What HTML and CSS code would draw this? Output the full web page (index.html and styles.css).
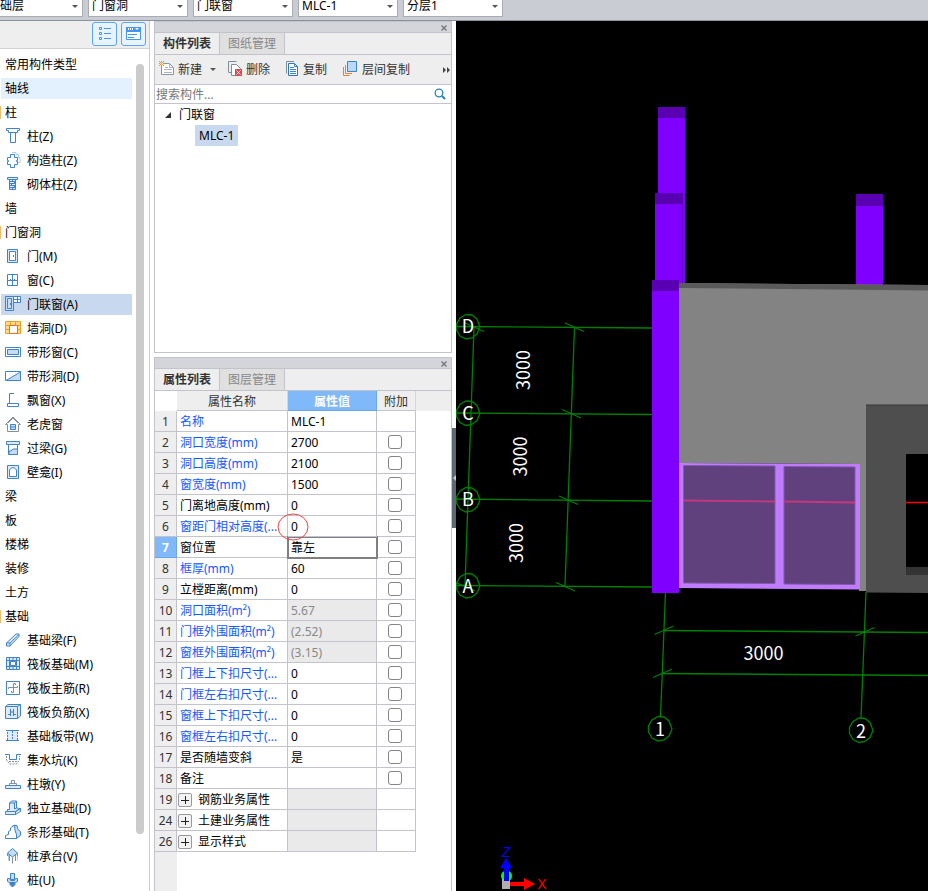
FILE: index.html
```html
<!DOCTYPE html>
<html lang="zh-CN">
<head>
<meta charset="utf-8">
<title>构件与属性</title>
<link rel="stylesheet" href="styles.css">
</head>
<body>
<div class="app">
  <header class="topbar">
    <select class="combo combo-first" aria-label="楼层"><option>础层</option></select>
    <select class="combo" aria-label="构件分类"><option>门窗洞</option></select>
    <select class="combo" aria-label="构件类型"><option>门联窗</option></select>
    <select class="combo" aria-label="构件名称"><option>MLC-1</option></select>
    <select class="combo" aria-label="分层"><option>分层1</option></select>
  </header>
  <div class="workspace">
    <aside class="sidebar">
      <div class="side-tools">
        <button class="view-btn" type="button" aria-label="列表视图"><svg width="17" height="16" viewBox="0 0 17 16"><g fill="none" stroke="#4596ee"><path d="M3.500 1.500h2v2h-2zM3.500 6.500h2v2h-2zM3.500 11.500h2v2h-2zM8 2.500h7M8 7.500h7M8 12.500h7"/></g></svg></button>
        <button class="view-btn" type="button" aria-label="面板视图"><svg width="17" height="16" viewBox="0 0 17 16"><path d="M1.500 1.500h14v12h-14z" fill="#fff" stroke="#4596ee"/><path d="M1 1h15v5H1z" fill="#4596ee"/><path d="M3.500 2v2M5.500 2v2M7.500 2v2" stroke="#fff"/><path d="M10 2h4l-2 2z" fill="#fff"/><path d="M3 8.500h9M3 11.500h6" stroke="#4596ee"/></svg></button>
      </div>
      <div class="side-body">
        <ul class="types">
          <li class="group">常用构件类型</li>
          <li class="group hover">轴线</li>
          <li class="group open">柱</li>
          <li><svg class="ic" viewBox="0 0 16 16"><path d="M1.500.5h13v2h-2v2h-9v-2h-2zM5.500 4.500h5v10h-5z"/></svg>柱(Z)</li>
          <li><svg class="ic" viewBox="0 0 16 16"><path class="pale" d="M7 .5h4v2h2.500v3H15v5h-2"/><path d="M5.500 2.500h4v3h3v3h-1v1h1v3h-3v3h-4v-3h-3v-3h1v-1h-1v-3h3z"/></svg>构造柱(Z)</li>
          <li><svg class="ic" viewBox="0 0 16 16"><path class="fill" d="M2.500 1.500h10v2h-10zM4.500 3.500h6v10h-6z"/><path d="M5 5.500h6M5 7.500h6M5 9.500h6M5 11.500h6M7.500 4v1.500M9.500 5.500v2M6.500 7.500v2M9.500 9.500v2M7.500 11.500v2"/></svg>砌体柱(Z)</li>
          <li class="group">墙</li>
          <li class="group open">门窗洞</li>
          <li><svg class="ic" viewBox="0 0 16 16"><path class="fill" d="M2.500 1.500h10v13h-10z"/><path class="white" d="M4.500 3.500h6v9h-6z"/><path d="M8.500 7v2"/></svg>门(M)</li>
          <li><svg class="ic" viewBox="0 0 16 16"><path d="M2.500 2.500h10v11h-10zM7.500 3v10M3 8.500h9M5.500 7v1M9.500 7v1"/></svg>窗(C)</li>
          <li class="selected"><svg class="ic" viewBox="0 0 16 16"><path class="mid" d="M.5.5h8v14h-8z"/><path class="mid" d="M2.500 2.500h4v10h-4z"/><path class="white" d="M8.500.5h7v6h-7z"/><path d="M12.500.5v6M8.500 3.500h7M5.500 7v2"/></svg>门联窗(A)</li>
          <li><svg class="ic" viewBox="0 0 16 16"><path d="M.5 1.500h15v12H.5z" fill="#ffd98a" stroke="#f0a01c"/><path d="M.5 5.500h15M.5 9.500h4M11 9.500h4M5.500 2v3M10.500 2v3" stroke="#f0a01c"/><path d="M4.500 5.500h8v8h-8z" fill="#fff" stroke="#f26a21"/></svg>墙洞(D)</li>
          <li><svg class="ic" viewBox="0 0 16 16"><path class="white" d="M.5 3.500h15v9H.5z"/><path class="mid" d="M2.500 5.500h11v5h-11z"/></svg>带形窗(C)</li>
          <li><svg class="ic" viewBox="0 0 16 16"><path class="white" d="M.5 3.500h15v9H.5z"/><path class="mid" d="M1 12.500 15.500 4v8.500z"/></svg>带形洞(D)</li>
          <li><svg class="ic" viewBox="0 0 16 16"><path d="M9 1.500H4.500v10M2.500 11.500h11v3h-11z"/></svg>飘窗(X)</li>
          <li><svg class="ic" viewBox="0 0 16 16"><path class="gray" d="M.5 8.500 8 1l7.500 7.500h-2v7h-11v-7zM3 7l5-5 5 5"/><path class="mid" d="M5.500 8.500h5v5h-5zM5.500 11h5"/></svg>老虎窗</li>
          <li><svg class="ic" viewBox="0 0 16 16"><path class="fill" d="M1.500 1.500h13v3h-13z"/><path class="white" d="M3.500 4.500h9v10h-9z"/><path class="mid" d="M4 11h2l2-2h4.500v5.500H4z"/></svg>过梁(G)</li>
          <li><svg class="ic" viewBox="0 0 16 16"><path class="fill" d="M2.500 1.500h11v13h-11z"/><path class="white" d="M4.500 12.500V6q3.500-5 7 0v6.500z"/></svg>壁龛(I)</li>
          <li class="group">梁</li>
          <li class="group">板</li>
          <li class="group">楼梯</li>
          <li class="group">装修</li>
          <li class="group">土方</li>
          <li class="group open">基础</li>
          <li><svg class="ic" viewBox="0 0 16 16"><path class="fill" d="M1.500 11 11 2h3v2.500L5 14H1.500z"/><path d="M1.500 11H5v3M5 11l9-8.500"/></svg>基础梁(F)</li>
          <li><svg class="ic" viewBox="0 0 16 16"><path class="fill" d="M1.500 1.500h13v12h-13z"/><path d="M1.500 4.500h13M1.500 10.500h13M4.500 1.500v12M11.500 1.500v12M8 1.500v3M8 10.500v3"/><path class="white" d="M5.500 5.500h5v4h-5z"/></svg>筏板基础(M)</li>
          <li><svg class="ic" viewBox="0 0 16 16"><path d="M1.500 1.500h13v13h-13z"/><path class="gray" d="M10.500 5V3.500h-2v9h-2V11M3.500 9V7.500h9V6"/></svg>筏板主筋(R)</li>
          <li><svg class="ic" viewBox="0 0 16 16"><path class="fill" d="M3 .5h12.500V12l-3 2.500H.5v-12z"/><path d="M.5 2.500h12v12M12.500 2.500l3-2M5.500 5v7M8.500 5v7M3 10.500h2.500M5.500 8h3M8.500 10.500H11"/></svg>筏板负筋(X)</li>
          <li><svg class="ic" viewBox="0 0 16 16"><path class="palefill" d="M2 2h11v11H2z"/><path d="M1 2.500h13M1 12.500h13"/><path class="dots" d="M2.500 4v8M7.500 3v10M12.500 4v8"/></svg>基础板带(W)</li>
          <li><svg class="ic" viewBox="0 0 16 16"><path d="M0 2.500h4.500v5h7v-5H16"/><path class="gray dots" d="M1.500 4v4l3 4h7l3-4V4M4 9.500h8"/></svg>集水坑(K)</li>
          <li><svg class="ic" viewBox="0 0 16 16"><path class="fill" d="M.5 9.500h15v3H.5z"/><path class="gray" d="M4.500 9.500V7.500h7v2M6.500 7.500v-3h3v3"/></svg>柱墩(Y)</li>
          <li><svg class="ic" viewBox="0 0 16 16"><path class="fill" d="M.5 11.500h10v3H.5zM10.500 11.500l5-3v3l-5 3zM2.500 11.500v-2h2V3l2-2h5v7l4 .5-5 3z"/><path d="M4.500 3h5v6M9.500 3l2-2M9.500 9l2-1"/></svg>独立基础(D)</li>
          <li><svg class="ic" viewBox="0 0 16 16"><path class="mid" d="M9.500 5.500 8 1.500h4l1 4 2.500 2v4l-4 3z"/><path class="white" d="M.5 14.500v-3l3-1v-3l2-1V4l4-3 .5 5.500 1.500 4v4z"/></svg>条形基础(T)</li>
          <li><svg class="ic" viewBox="0 0 16 16"><path class="pale" d="M3.500 5.500v7M12.500 5.500v7"/><path class="mid" d="M7.500.5 12.500 5l-5 4-5-4z"/><path class="gray" d="M4.500 7v6M7.500 9v6.500M10.500 7v6M2.500 5v3M12.500 5v3"/></svg>桩承台(V)</li>
          <li><svg class="ic" viewBox="0 0 16 16"><path class="mid" d="M5.500 1.500h4v6h-4z"/><path class="mid" d="M2.500 6.500h2l1 2h4l1-2h2v3l-2 1h-6l-2-1z"/><path d="M5 10.500h5v2L7.500 15 5 12.500z" fill="#3f83cb"/></svg>桩(U)</li>
        </ul>
        <div class="scroll"><div class="thumb"></div></div>
      </div>
    </aside>

    <div class="panels">
      <section class="panel">
        <div class="titlebar"><button type="button" class="close" aria-label="关闭构件列表"><svg width="8" height="8" viewBox="0 0 8 8"><path d="M1.500 1.500l5 5M6.500 1.500l-5 5"/></svg></button></div>
        <div class="tabs"><button type="button" class="tab active">构件列表</button><button type="button" class="tab">图纸管理</button></div>
        <div class="toolbar">
          <button type="button" class="tool"><svg width="16" height="16" viewBox="0 0 16 16"><path d="M2.500 2.500h8l4 4v7h-12z" fill="#fff" stroke="#8796a5"/><path d="M10.500 2.500v4h4M6 6.500h3M5 8.500h8M5 11.500h8" fill="none" stroke="#a9b4c0"/><path d="M0 0h5v5H0z" fill="#eee"/><path d="M0 0l5 5M5 0 0 5M2.500 0v1M2.500 4v1M0 2.500h1M4 2.500h1" stroke="#f0971b"/></svg>新建<span class="caret"></span></button>
          <button type="button" class="tool"><svg width="16" height="16" viewBox="0 0 16 16"><path d="M9.500.5h-8v11H4" fill="none" stroke="#7f8e9c"/><path d="M4.500 3.500h5l4 4v7h-9z" fill="#fff" stroke="#7f8e9c"/><path d="M8 8h7v7H8z" fill="#d94a52"/><path d="m9.500 9.500 4 4M13.500 9.500l-4 4" stroke="#fff"/></svg>删除</button>
          <button type="button" class="tool tool-copy"><svg width="13" height="16" viewBox="0 0 13 16"><path d="M8 .5H.5v12" fill="none" stroke="#7f8e9c"/><path d="M2.500 2.500h6l3 3v9h-9z" fill="#fff" stroke="#2e75c3"/><path d="M8.500 2.500v3h3M4 6.500h4M4 8.500h6M4 10.500h6M4 12.500h6" fill="none" stroke="#3f83cb"/></svg>复制</button>
          <button type="button" class="tool tool-copy"><svg width="15" height="16" viewBox="0 0 15 16"><path d="M2.500 4v8.500H9M.5 6v8.500h6" fill="none" stroke="#ef7e32"/><path d="M4.500.5h9v10h-9z" fill="#b9d8fa" stroke="#3f83cb"/></svg>层间复制</button>
          <button type="button" class="more" aria-label="更多"><svg width="8" height="6" viewBox="0 0 8 6"><path d="M0 0l3 3-3 3zM4 0l3 3-3 3z" fill="#444"/></svg></button>
        </div>
        <div class="search"><input type="text" aria-label="搜索构件" placeholder="搜索构件..."><svg width="12" height="12" viewBox="0 0 12 12"><circle cx="5" cy="5" r="3.800" fill="none" stroke="#2783bd" stroke-width="1.300"/><path d="m8 8 3 3" stroke="#2783bd" stroke-width="2"/></svg></div>
        <ul class="tree">
          <li class="node"><svg width="7" height="7" viewBox="0 0 7 7"><path d="M6 0v6H0z" fill="#333"/></svg>门联窗</li>
          <li class="leaf"><span>MLC-1</span></li>
        </ul>
      </section>

      <section class="panel panel-props">
        <div class="titlebar"><button type="button" class="close" aria-label="关闭属性列表"><svg width="8" height="8" viewBox="0 0 8 8"><path d="M1.500 1.500l5 5M6.500 1.500l-5 5"/></svg></button></div>
        <div class="tabs"><button type="button" class="tab active">属性列表</button><button type="button" class="tab">图层管理</button></div>
        <div class="grid-area">
          <table class="props">
            <colgroup><col class="c-num"><col class="c-name"><col class="c-val"><col class="c-add"><col></colgroup>
            <thead><tr><th class="corner"></th><th>属性名称</th><th class="on">属性值</th><th>附加</th><th class="rest"></th></tr></thead>
            <tbody>
              <tr><th>1</th><td class="blue">名称</td><td>MLC-1</td><td></td></tr>
              <tr><th>2</th><td class="blue">洞口宽度(mm)</td><td>2700</td><td><input type="checkbox" aria-label="附加 洞口宽度"></td></tr>
              <tr><th>3</th><td class="blue">洞口高度(mm)</td><td>2100</td><td><input type="checkbox" aria-label="附加 洞口高度"></td></tr>
              <tr><th>4</th><td class="blue">窗宽度(mm)</td><td>1500</td><td><input type="checkbox" aria-label="附加 窗宽度"></td></tr>
              <tr><th>5</th><td>门离地高度(mm)</td><td>0</td><td><input type="checkbox" aria-label="附加 门离地高度"></td></tr>
              <tr><th>6</th><td class="blue">窗距门相对高度(...</td><td class="marked">0<svg class="ring" viewBox="0 0 32 28"><ellipse cx="16" cy="14" rx="15" ry="13"/></svg></td><td><input type="checkbox" aria-label="附加 窗距门相对高度"></td></tr>
              <tr><th class="on">7</th><td>窗位置</td><td class="focus">靠左</td><td><input type="checkbox" aria-label="附加 窗位置"></td></tr>
              <tr><th>8</th><td class="blue">框厚(mm)</td><td>60</td><td><input type="checkbox" aria-label="附加 框厚"></td></tr>
              <tr><th>9</th><td>立樘距离(mm)</td><td>0</td><td><input type="checkbox" aria-label="附加 立樘距离"></td></tr>
              <tr><th>10</th><td class="blue">洞口面积(m²)</td><td class="ro">5.67</td><td><input type="checkbox" aria-label="附加 洞口面积"></td></tr>
              <tr><th>11</th><td class="blue">门框外围面积(m²)</td><td class="ro">(2.52)</td><td><input type="checkbox" aria-label="附加 门框外围面积"></td></tr>
              <tr><th>12</th><td class="blue">窗框外围面积(m²)</td><td class="ro">(3.15)</td><td><input type="checkbox" aria-label="附加 窗框外围面积"></td></tr>
              <tr><th>13</th><td class="blue">门框上下扣尺寸(...</td><td>0</td><td><input type="checkbox" aria-label="附加 门框上下扣尺寸"></td></tr>
              <tr><th>14</th><td class="blue">门框左右扣尺寸(...</td><td>0</td><td><input type="checkbox" aria-label="附加 门框左右扣尺寸"></td></tr>
              <tr><th>15</th><td class="blue">窗框上下扣尺寸(...</td><td>0</td><td><input type="checkbox" aria-label="附加 窗框上下扣尺寸"></td></tr>
              <tr><th>16</th><td class="blue">窗框左右扣尺寸(...</td><td>0</td><td><input type="checkbox" aria-label="附加 窗框左右扣尺寸"></td></tr>
              <tr><th>17</th><td>是否随墙变斜</td><td>是</td><td><input type="checkbox" aria-label="附加 是否随墙变斜"></td></tr>
              <tr><th>18</th><td>备注</td><td></td><td><input type="checkbox" aria-label="附加 备注"></td></tr>
              <tr><th>19</th><td class="fold"><button type="button" aria-label="展开钢筋业务属性"></button>钢筋业务属性</td><td class="ro"></td><td></td></tr>
              <tr><th>24</th><td class="fold"><button type="button" aria-label="展开土建业务属性"></button>土建业务属性</td><td class="ro"></td><td></td></tr>
              <tr><th>26</th><td class="fold"><button type="button" aria-label="展开显示样式"></button>显示样式</td><td class="ro"></td><td></td></tr>
            </tbody>
          </table>
          <div class="gutter"></div>
        </div>
      </section>
    </div>

    <div class="splitter"><button type="button" class="handle" aria-label="收起面板"><svg width="4" height="8" viewBox="0 0 4 8"><path d="M4 1v6L1 4z" fill="#c8ccd2"/></svg></button></div>

    <main class="view">
      <svg class="scene" viewBox="456 21 472 870" preserveAspectRatio="xMinYMin slice" role="img" aria-label="三维视图">
        <g fill="none" stroke="#008000" stroke-width="1.300">
          <path d="M456 326.500 652 328M456 413 652 414.500M456 499 652 501M456 585.500 652 587" />
          <path d="M474 327 465 586M574.500 327 565 586"/>
          <path d="m565 323 19 8.500M562 409.500l19 8.500M559 496l19 8.500M556 582.500l19 8.500M465 323l19 8.500M456 582.500l19 8.500"/>
          <path d="M665.500 592 660.500 717M866 592l-5 126"/>
          <path d="M663 630.500 928 632.500M661 673.500 928 675.500"/>
          <path d="m654.500 634.500 19-8.500M653 677.500l19-8.500M855.500 636l19-8.500"/>
        </g>
        <g fill="none" stroke="#008000" stroke-width="1.300">
          <path id="bubble" d="M480 327l-3 7-5 4-6 1-6-3-3.500-6v-6l3.500-6 6-3.500 6 .5 5 4z"/>
          <use href="#bubble" y="86.500"/><use href="#bubble" y="173"/><use href="#bubble" y="259"/>
          <use href="#bubble" x="192" y="402"/><use href="#bubble" x="393" y="403.500"/>
        </g>
        <path d="M658 107h27v177h-27zM655 194h28v90h-28zM856 194h27v92h-27z" fill="#8000ff"/>
        <path d="M658 107h27v11h-27zM655 193h28v11h-28zM856 194h27v12h-27z" fill="#5900b2"/>
        <path d="M682.500 204v80" stroke="#6400c8"/>
        <path d="M679 283l249 2v307H866v-1h-7V464l-180-1z" fill="#838383"/>
        <path d="M679 283l249 2v5.500l-249-2.500z" fill="#5a5a5a"/>
        <path d="M652 280h27v313h-27z" fill="#8000ff"/>
        <path d="M652 280h27v11h-27z" fill="#5900b2"/>
        <path d="M866 405h62v188l-62-.5z" fill="#4e4e4e"/><path d="M866 405h62" stroke="#353535"/>
        <path d="M906 454h22v121h-22z" fill="#000"/><path d="M906 567h22v8h-22z" fill="#333"/>
        <path d="M906 502.500h22" stroke="#f00" stroke-width="1.500"/>
        <path d="M679 463l181 1v125.500L679 588z" fill="#c07cff"/>
        <path d="M683.500 465.500l91.500.5v117.500l-91.500-.5zM784 466.500l71 .5v117.500l-71-.5z" fill="#61407e" stroke="#8557ad"/>
        <path d="m684 500.500 91 1M784 501.500l71 1" stroke="#c2397d" stroke-width="1.800"/>
        <g class="mark">
          <text x="468" y="333">D</text><text x="468" y="420">C</text><text x="468" y="506">B</text><text x="468" y="593">A</text>
          <text x="660" y="736">1</text><text x="861" y="738">2</text><text x="763.500" y="660">3000</text>
          <text transform="translate(530 370) rotate(-90)">3000</text>
          <text transform="translate(526.500 456.500) rotate(-90)">3000</text>
          <text transform="translate(523 543) rotate(-90)">3000</text>
        </g>
        <circle cx="506.500" cy="876" r="5.500" fill="#0f0"/>
        <path d="M502 879h8v10h-8z" fill="#b0b0b0"/>
        <path d="M506 858l6 10h-3v13h-5v-13h-4z" fill="#00f"/>
        <path d="M510 882h14v-4l11 6-11 6v-4h-14z" fill="#f00"/>
        <text class="axis axis-z" x="506" y="857">Z</text>
        <text class="axis axis-x" x="542" y="889">X</text>
      </svg>
    </main>
  </div>
</div>
</body>
</html>
```
FILE: styles.css
```css
* { box-sizing: border-box; }
body {
  margin: 0;
  font: 12px/20px "Noto Sans", "Noto Sans CJK SC", sans-serif;
  color: #000;
  background: #fff;
}
button, select, input { font: inherit; color: inherit; }
button { border: 0; padding: 0; background: none; }
ul { list-style: none; margin: 0; padding: 0; }
svg { display: block; flex: none; }

.app { display: flex; flex-direction: column; height: 100vh; overflow: hidden; }

.topbar {
  display: flex;
  flex: none;
  align-items: flex-end;
  gap: 5px;
  height: 21px;
  padding-bottom: 3px;
  overflow: hidden;
  background: #c9cdd3;
  border-bottom: 1px solid #8c929b;
}
.combo {
  appearance: none;
  flex: none;
  width: 100px;
  height: 24px;
  padding: 2px 16px 0 3px;
  border: 1px solid #a9adb3;
  border-radius: 0;
  background: #fff url("data:image/svg+xml,%3Csvg xmlns='http://www.w3.org/2000/svg' width='6' height='4'%3E%3Cpath d='M0 0h6L3 3z' fill='%23555'/%3E%3C/svg%3E") no-repeat right 4px top 11px;
}
.combo-first { width: 83px; padding-left: 0; border-left: 0; }

.workspace { display: flex; flex: 1; min-height: 0; }

.sidebar {
  display: flex;
  flex-direction: column;
  flex: none;
  width: 150px;
  border-right: 1px solid #c9c9d0;
}
.side-tools {
  display: flex;
  flex: none;
  justify-content: flex-end;
  align-items: center;
  gap: 4px;
  height: 28px;
  padding: 0 3px 2px 0;
  background: #eee;
  border-bottom: 1px solid #d0d0d4;
}
.view-btn {
  display: grid;
  place-items: center;
  width: 25px;
  height: 24px;
  border: 1px solid #58a5f3;
  border-radius: 3px;
  background: #e8f3fe;
}
.side-body { display: flex; flex: 1; min-height: 0; padding-top: 3px; }
.types { flex: 1; overflow: hidden; }
.types li {
  position: relative;
  display: flex;
  align-items: center;
  gap: 6px;
  height: 21px;
  margin: 2px 0 3px 1px;
  padding-left: 4px;
  white-space: nowrap;
}
.types .hover { background: #e3f1ff; }
.types .selected { background: #c8d9ef; }
.types .open::before {
  content: "";
  position: absolute;
  left: -1px;
  top: 4px;
  width: 1px;
  height: 13px;
  background: #edbd6a;
}
.ic { width: 16px; height: 16px; margin-bottom: 1px; fill: none; stroke: #3f83cb; }
.ic .fill { fill: #dceafa; }
.ic .mid { fill: #c4dcf6; }
.ic .white { fill: #fff; }
.ic .pale { stroke: #abcaec; }
.ic .palefill { fill: #dceafa; stroke: none; }
.ic .gray { stroke: #84919d; }
.ic .dots { stroke-dasharray: 2 1; }
.scroll { flex: none; width: 17px; padding: 12px 5px 57px 4px; }
.thumb { height: 100%; border-radius: 4px; background: #cbcbcb; }

.panels { display: flex; flex-direction: column; gap: 4px; flex: none; width: 302px; padding-left: 4px; }
.panel { flex: none; height: 332px; border: 1px solid #c3c4cb; display: flex; flex-direction: column; }
.panel-props { flex: 1; min-height: 0; height: auto; border-bottom: 0; }
.titlebar {
  display: flex;
  flex: none;
  justify-content: flex-end;
  align-items: flex-end;
  height: 11px;
  padding-right: 3px;
  background: #d4d5db;
  border-bottom: 1px solid #c3c4cb;
}
.close svg { fill: none; stroke: #777; stroke-width: 1.4; }
.tabs { display: flex; flex: none; height: 22px; background: #eee; border-bottom: 1px solid #c3c4cb; }
.tab { width: 65px; color: #888; background: #e0e0e1; border-right: 1px solid #c3c4cb; }
.tab.active { color: #333; font-weight: 700; background: #eee; }
.toolbar {
  display: flex;
  flex: none;
  align-items: center;
  gap: 11px;
  height: 30px;
  padding: 0 0 0 4px;
  color: #333;
  background: #eee;
  border-bottom: 1px solid #c3c4cb;
}
.tool { display: flex; align-items: center; gap: 3px; white-space: nowrap; }
.tool svg { margin-bottom: 2px; }
.tool-copy { gap: 4px; margin-left: 5px; }
.caret { margin-left: 5px; border: 3px solid transparent; border-top-color: #555; border-bottom-width: 0; }
.more { margin-left: auto; }
.search {
  display: flex;
  flex: none;
  align-items: center;
  height: 19px;
  padding-right: 5px;
  border-bottom: 1px solid #c3c4cb;
}
.search input { flex: 1; min-width: 0; height: 18px; padding: 2px 2px 0 1px; border: 0; outline: 0; background: none; }
.search input::placeholder { color: #777; }
.tree { padding-top: 1px; }
.node { display: flex; align-items: center; gap: 7px; height: 20px; padding-left: 10px; }
.leaf { padding-left: 40px; }
.leaf span { display: inline-block; height: 21px; padding: 0 4px; line-height: 22px; background: #c8d9ef; }

.grid-area { display: flex; flex-direction: column; flex: 1; min-height: 0; overflow: hidden; }
.props { flex: none; width: 100%; table-layout: fixed; border-collapse: separate; border-spacing: 0; }
.c-num { width: 22px; }
.c-name { width: 111px; }
.c-val { width: 89px; }
.c-add { width: 39px; }
.props th, .props td {
  height: 21px;
  padding: 2px 0 0;
  line-height: 18px;
  border-right: 1px solid #c3c4cb;
  border-bottom: 1px solid #c3c4cb;
  white-space: nowrap;
}
.props th { color: #333; font-weight: 400; text-align: center; background: #eee; }
.props thead th { height: 20px; line-height: 17px; border-right-color: #d6d6da; }
.props thead .corner { background: #fff; border-color: #fff; }
.props thead .rest { border-color: #eee; }
.props th.on, .props thead th.on { color: #fff; font-weight: 700; background: #7fb9fa; border-color: #6aa6e8; }
.props td { padding-left: 3px; }
.props td:nth-child(4) { padding: 0 2px 0 0; }
.props .blue { color: #1558ff; }
.props .ro { color: #888; background: #eaeaea; }
.props .focus { outline: 2px solid #808080; outline-offset: -1px; }
.props .marked { position: relative; }
.ring { position: absolute; left: -11px; top: -3px; width: 32px; height: 28px; fill: none; stroke: #ee4444; }
.props input {
  appearance: none;
  display: block;
  width: 14px;
  height: 14px;
  margin: 0 auto;
  border: 1px solid #858585;
  border-radius: 3px;
  background: #fff;
}
.props .fold { padding-left: 1px; }
.fold button {
  display: inline-block;
  width: 14px;
  height: 14px;
  margin-right: 6px;
  vertical-align: -2px;
  border: 1px solid #999;
  border-radius: 2px;
  background:
    linear-gradient(#222, #222) center / 8px 1px no-repeat,
    linear-gradient(#222, #222) center / 1px 8px no-repeat,
    #f3f3f3;
}
.gutter { flex: 1; width: 22px; background: #eee; }

.splitter { display: flex; flex: none; align-items: flex-start; width: 4px; padding-top: 407px; }
.handle { display: grid; place-items: center; width: 4px; height: 100px; background: #5e6875; }

.view { flex: 1; min-width: 0; background: #000; }
.scene { width: 100%; height: 100%; }
.mark { font: 18px "Noto Sans CJK SC", sans-serif; fill: #fff; text-anchor: middle; }
.axis { font: 14px "Liberation Sans", sans-serif; text-anchor: middle; }
.axis-z { fill: #00f; font-style: italic; }
.axis-x { fill: #f00; }
```
